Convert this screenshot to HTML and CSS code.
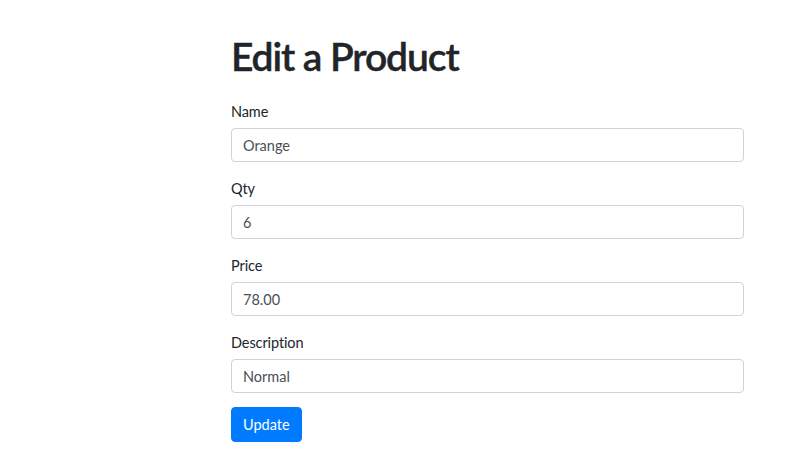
FILE: index.html
```html
<!DOCTYPE html>
<html lang="en">
<head>
<meta charset="utf-8">
<title>Edit a Product</title>
<link rel="stylesheet" href="styles.css">
</head>
<body>
<main class="page">
  <h1 class="title">Edit a Product</h1>
  <form class="form">
    <div class="group">
      <label class="label" for="name">Name</label>
      <input class="control" id="name" type="text" value="Orange">
    </div>
    <div class="group">
      <label class="label" for="qty">Qty</label>
      <input class="control" id="qty" type="text" value="6">
    </div>
    <div class="group">
      <label class="label" for="price">Price</label>
      <input class="control" id="price" type="text" value="78.00">
    </div>
    <div class="group group-last">
      <label class="label" for="desc">Description</label>
      <input class="control" id="desc" type="text" value="Normal">
    </div>
    <button class="btn" type="button">Update</button>
  </form>
</main>
</body>
</html>
```
FILE: styles.css
```css
* { box-sizing: border-box; }
html, body { margin: 0; background: #fff; }
body {
  font-family: Lato, "Noto Sans", sans-serif;
  font-size: 14px;
  line-height: 1.5;
  color: #212529;
}
.page {
  width: 513px;
  margin-left: 231px;
  padding-top: 32px;
}
.title {
  margin: 0 0 21px;
  font-size: 39px;
  line-height: 48px;
  font-weight: 600;
  letter-spacing: -1.1px;
  color: #212529;
  -webkit-text-stroke: 0.4px #212529;
}
.form { display: flex; flex-direction: column; align-items: flex-start; }
.group { width: 100%; margin-bottom: 16px; display: flex; flex-direction: column; }
.group-last { margin-bottom: 14px; }
.label { display: block; margin-bottom: 6px; line-height: 21px; font-size: 14.5px; letter-spacing: -0.1px; }
.control {
  display: block;
  width: 100%;
  height: 34px;
  padding: 6px 11px;
  font: inherit;
  font-size: 14.5px;
  line-height: 20px;
  color: #495057;
  background: #fff;
  border: 1px solid #ced4da;
  border-radius: 4px;
}
.btn {
  height: 35px;
  padding: 6px 11px;
  font: inherit;
  font-size: 14.5px;
  line-height: 21px;
  color: #fff;
  background: #007bff;
  border: 1px solid #007bff;
  border-radius: 4px;
  cursor: pointer;
}
```
